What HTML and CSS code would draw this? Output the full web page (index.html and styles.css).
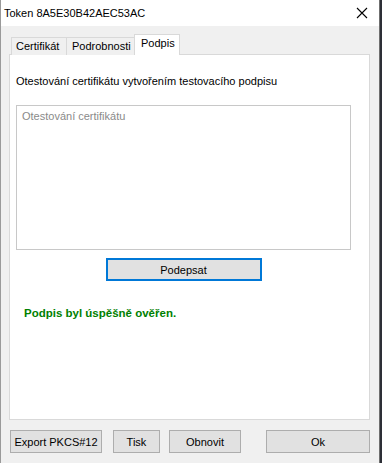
FILE: index.html
```html
<!DOCTYPE html>
<html lang="cs">
  <head>
    <meta charset="UTF-8" />
    <meta name="viewport" content="width=device-width, initial-scale=1.0" />
    <title>Token 8A5E30B42AEC53AC</title>
    <link rel="stylesheet" href="styles.css">
  </head>
  <body>
    <div class="window">
      <div class="titlebar">
        <span class="title">Token 8A5E30B42AEC53AC</span>
        <svg class="close" width="12" height="12" viewBox="0 0 12 12">
          <path d="M1 1 L11 11 M11 1 L1 11" stroke="#000" stroke-width="1.1" fill="none" />
        </svg>
      </div>

      <div class="content">
        <div class="tabs">
          <div class="tab tab-cert">Certifikát</div>
          <div class="tab tab-detail">Podrobnosti</div>
          <div class="tab tab-sign active">Podpis</div>
        </div>

        <div class="panel">
          <p class="label">Otestování certifikátu vytvořením testovacího podpisu</p>
          <div class="textbox">
            <span class="placeholder">Otestování certifikátu</span>
          </div>
          <div class="sign-row">
            <button class="btn btn-sign">Podepsat</button>
          </div>
          <p class="result">Podpis byl úspěšně ověřen.</p>
        </div>

        <div class="footer">
          <button class="btn btn-export">Export PKCS#12</button>
          <button class="btn btn-print">Tisk</button>
          <button class="btn btn-refresh">Obnovit</button>
          <button class="btn btn-ok">Ok</button>
        </div>
      </div>
    </div>
  </body>
</html>
```

FILE: styles.css
```css
body {
  margin: 0;
  padding: 0;
  background-color: #2d2f36;
  font-family: "Liberation Sans", Arial, sans-serif;
  font-size: 11px;
  color: #000;
}

.window {
  width: 380px;
  height: 463px;
  box-sizing: border-box;
  background-color: #f0f0f0;
  border-left: 1px solid #9a9a9a;
  border-right: 1px solid #6f6f6f;
  display: flex;
  flex-direction: column;
}

.titlebar {
  height: 26px;
  background-color: #fff;
  display: flex;
  align-items: center;
  justify-content: space-between;
  padding: 0 10px 0 3px;
  flex-shrink: 0;
}

.title {
  font-size: 11px;
  line-height: 12px;
}

.close {
  display: block;
  margin-right: 1px;
}

.content {
  flex: 1;
  display: flex;
  flex-direction: column;
  padding: 8px 9px 0 8px;
}

/* tab strip */
.tabs {
  display: flex;
  align-items: flex-end;
  height: 21px;
  padding-left: 2px;
  margin-bottom: -1px;
  position: relative;
  z-index: 1;
}

.tab {
  box-sizing: border-box;
  height: 18px;
  border: 1px solid #d9d9d9;
  border-bottom: none;
  background-color: #f0f0f0;
  padding-left: 4px;
  line-height: 17px;
  white-space: nowrap;
}

.tab + .tab {
  border-left: none;
}

.tab-cert {
  width: 56px;
}

.tab-detail {
  width: 68px;
  padding-left: 5px;
}

.tab-sign {
  width: 46px;
}

.tab.active {
  height: 21px;
  background-color: #fff;
  padding-left: 6px;
  line-height: 17px;
  border-left: 1px solid #d9d9d9;
  margin-left: -1px;
}

.panel {
  height: 366px;
  box-sizing: border-box;
  background-color: #fff;
  border: 1px solid #d9d9d9;
  padding: 0 18px 0 6px;
}

.label {
  margin: 19px 0 0 0;
  line-height: 14px;
}

.textbox {
  height: 145px;
  box-sizing: border-box;
  border: 1px solid #c8c8c8;
  margin-top: 17px;
  padding: 3px 5px;
}

.placeholder {
  color: #8a8a8a;
  line-height: 14px;
}

.sign-row {
  display: flex;
  justify-content: center;
  margin-top: 8px;
}

.btn {
  font-family: "Liberation Sans", Arial, sans-serif;
  font-size: 11px;
  color: #000;
  background-color: #e1e1e1;
  border: 1px solid #adadad;
  border-radius: 0;
  padding: 0;
  margin: 0;
  height: 23px;
  box-sizing: border-box;
  white-space: nowrap;
}

.btn-sign {
  width: 156px;
  border: 2px solid #0078d7;
}

.result {
  margin: 24px 0 0 8px;
  color: #008000;
  font-weight: bold;
  font-size: 11.5px;
  line-height: 16px;
}

.footer {
  display: flex;
  margin-top: 10px;
  padding-left: 1px;
}

.btn-export {
  width: 92px;
}

.btn-print {
  width: 47px;
  margin-left: 11px;
}

.btn-refresh {
  width: 72px;
  margin-left: 9px;
}

.btn-ok {
  width: 104px;
  margin-left: 25px;
}
```
